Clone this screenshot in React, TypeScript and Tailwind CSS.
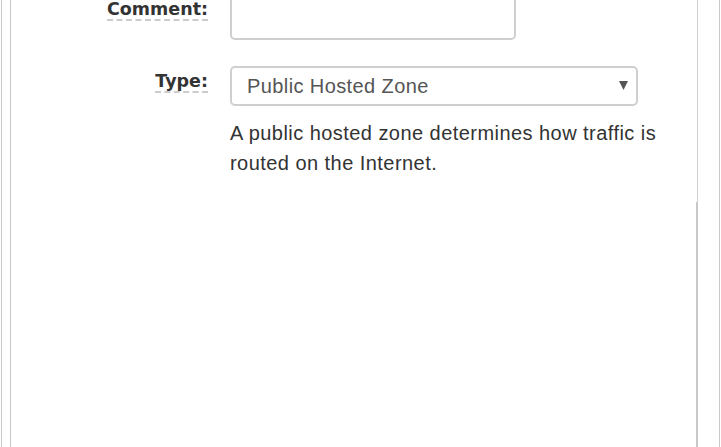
const labelCls =
  "inline-block font-['DejaVu_Sans',Verdana,sans-serif] font-bold text-[17.5px] leading-[20px] text-[#333] border-b-2 border-dashed border-[#ccc]";

function Row({ label, children }: { label: string; children: React.ReactNode }) {
  return (
    <div className="flex items-start">
      <div className="w-[197px] shrink-0 text-right pt-[4px]">
        <span className={labelCls}>{label}</span>
      </div>
      <div className="ml-[22px] flex-1">{children}</div>
    </div>
  );
}

export default function App() {
  return (
    <div className="w-[721px] h-[447px] overflow-hidden bg-white flex font-['Liberation_Sans',Arial,sans-serif]">
      <div className="w-px" />
      <div className="w-px bg-[#c8c8c8]" />
      <div className="w-[8px]" />
      <div className="w-px bg-[#c8c8c8]" />

      <main className="flex-1 flex flex-col">
        <div className="-mt-[6px]">
          <Row label="Comment:">
            <div className="w-[286px] h-[46px] rounded-[5px] border-2 border-[#cfcfcf] bg-white" />
          </Row>
        </div>

        <div className="mt-[26px]">
          <Row label="Type:">
            <div className="relative w-[408px] h-[40px] rounded-[5px] border-2 border-[#cfcfcf] bg-white flex items-center pl-[15px] text-[20px] tracking-[0.4px] text-[#555]">
              Public Hosted Zone
              <svg
                className="absolute right-[8px] top-[13px]"
                width="9"
                height="9"
                viewBox="0 0 9 9"
              >
                <polygon points="0,0 9,0 4.5,9" fill="#555" />
              </svg>
            </div>
            <p className="mt-[12px] w-[450px] text-[20px] tracking-[0.45px] leading-[30px] text-[#333]">
              A public hosted zone determines how traffic is routed on the Internet.
            </p>
          </Row>
        </div>
      </main>

      <div className="w-[2px] flex flex-col">
        <div className="h-[202px] flex">
          <div className="w-px" />
          <div className="w-px bg-[#d0d0d0]" />
        </div>
        <div className="flex-1 bg-[#c8c8c8]" />
      </div>
      <div className="w-[21px]" />
      <div className="w-px bg-[#c8c8c8]" />
      <div className="w-px" />
    </div>
  );
}
